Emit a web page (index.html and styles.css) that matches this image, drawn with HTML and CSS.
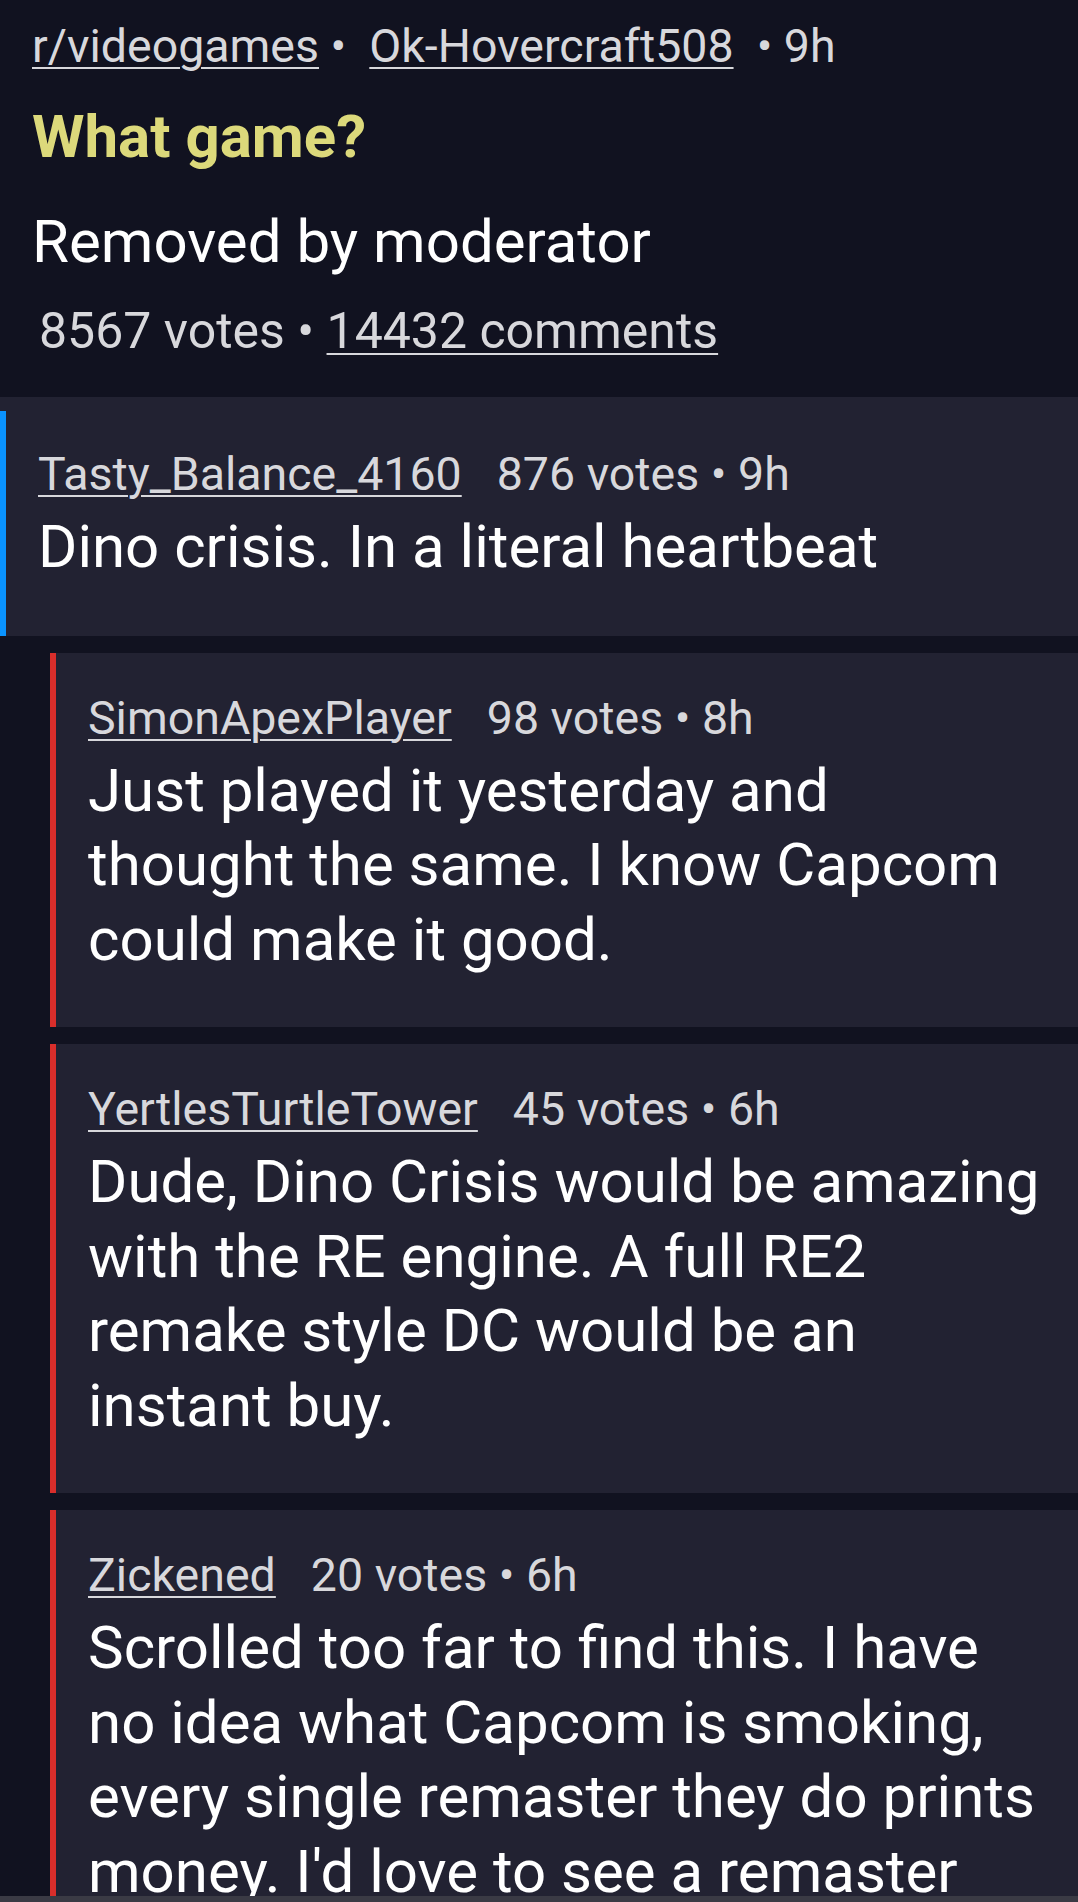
FILE: index.html
```html
<!DOCTYPE html>
<html lang="en">
<head>
<meta charset="utf-8">
<title>What game?</title>
<link rel="stylesheet" href="styles.css">
</head>
<body>
<div class="page">
  <section class="post">
    <div class="post-meta"><a class="link">r/videogames</a> •&nbsp; <a class="link">Ok-Hovercraft508</a>&nbsp; • 9h</div>
    <h1 class="post-title">What game?</h1>
    <p class="post-body">Removed by moderator</p>
    <div class="post-stats">8567 votes • <a class="link">14432 comments</a></div>
  </section>

  <article class="comment top">
    <div class="comment-inner top-inner">
      <div class="meta"><a class="link">Tasty_Balance_4160</a><span class="votes">876 votes • 9h</span></div>
      <p class="text">Dino crisis. In a literal heartbeat</p>
    </div>
  </article>

  <article class="comment reply">
    <div class="comment-inner reply-inner">
      <div class="meta"><a class="link">SimonApexPlayer</a><span class="votes">98 votes • 8h</span></div>
      <p class="text">Just played it yesterday and thought the same. I know Capcom could make it good.</p>
    </div>
  </article>

  <article class="comment reply">
    <div class="comment-inner reply-inner">
      <div class="meta"><a class="link">YertlesTurtleTower</a><span class="votes">45 votes • 6h</span></div>
      <p class="text">Dude, Dino Crisis would be amazing with the RE engine. A full RE2 remake style DC would be an instant buy.</p>
    </div>
  </article>

  <article class="comment reply">
    <div class="comment-inner reply-inner">
      <div class="meta"><a class="link">Zickened</a><span class="votes">20 votes • 6h</span></div>
      <p class="text">Scrolled too far to find this. I have no idea what Capcom is smoking, every single remaster they do prints money. I'd love to see a remaster</p>
    </div>
  </article>
</div>
<div class="nav-edge"></div>
</body>
</html>
```

FILE: styles.css
```css
html, body {
  margin: 0;
  padding: 0;
  background: #111220;
}

body {
  font-family: Roboto, "Noto Sans", "Liberation Sans", sans-serif;
  color: #ffffff;
}

.page {
  display: flex;
  flex-direction: column;
}

.link {
  color: inherit;
  text-decoration: underline;
  text-decoration-thickness: 2px;
  text-underline-offset: 5px;
}

.post {
  padding: 16px 20px 36px 32px;
  background: #111220;
}

.post-meta {
  font-size: 46.5px;
  line-height: 60px;
  color: #d8d8dc;
  white-space: nowrap;
}

.post-title {
  margin: 23px 0 0 0;
  font-size: 60px;
  line-height: 75px;
  font-weight: 700;
  color: #dcd97b;
}

.post-body {
  margin: 30px 0 0 0;
  font-size: 60px;
  line-height: 75px;
  color: #ffffff;
}

.post-stats {
  margin: 22px 0 0 7px;
  font-size: 50px;
  line-height: 60px;
  color: #d8d8dc;
}

.comment {
  background: #222232;
}

.comment.top {
  padding-top: 14px;
}

.comment.reply {
  margin: 17px 0 0 50px;
}

.comment-inner {
  padding: 35px 34px 50px 32px;
}

.top-inner {
  border-left: 6px solid #0a93ff;
  padding-top: 33px;
  padding-bottom: 51px;
}

.reply-inner {
  border-left: 6px solid #d92e2b;
}

.meta {
  font-size: 46.5px;
  line-height: 60px;
  color: #d8d8dc;
  white-space: nowrap;
}

.votes {
  margin-left: 35px;
}

.text {
  margin: 6px 0 0 0;
  font-size: 60px;
  line-height: 74.5px;
  color: #ffffff;
}

.nav-edge {
  position: fixed;
  left: 0;
  right: 0;
  bottom: 0;
  height: 6px;
  background: #3a3a44;
}
```
